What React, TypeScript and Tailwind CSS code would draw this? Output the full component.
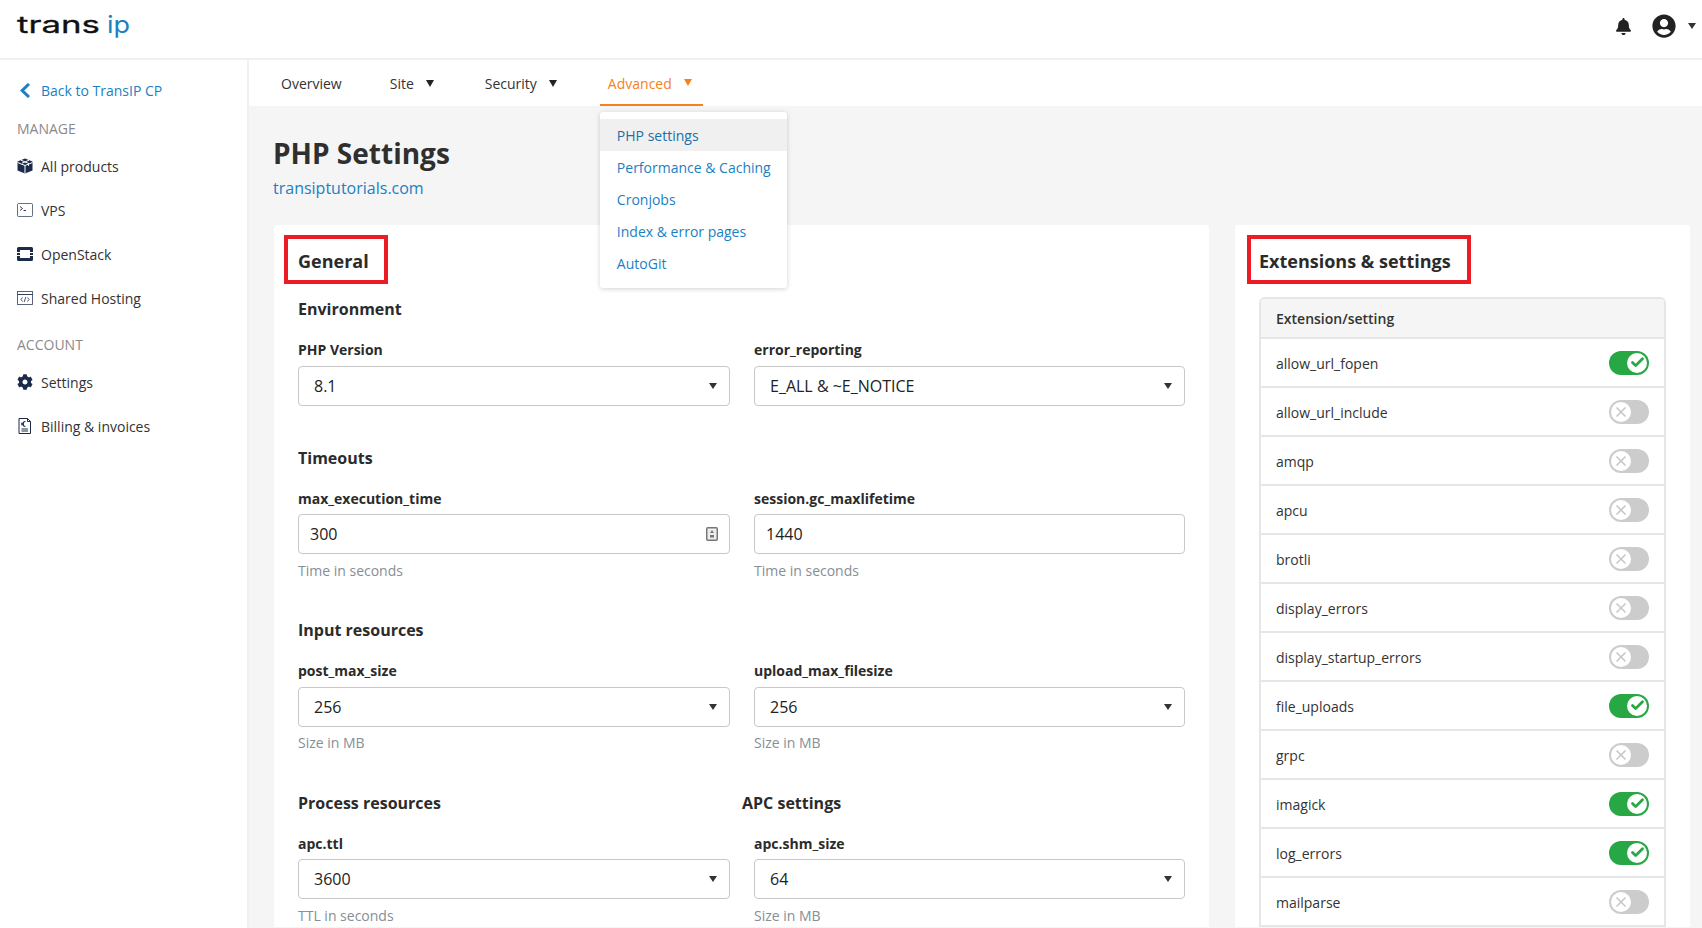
import { Check, X } from "lucide-react";
import { FaBell, FaCog, FaUserCircle } from "react-icons/fa";

const sideIconClass = "h-[16px] w-[16px] shrink-0 text-[#1c2b4a]";

function Caret({ className }: { className: string }) {
  return (
    <svg viewBox="0 0 8 7" preserveAspectRatio="none" className={className} fill="currentColor">
      <path d="M0 0h8L4 7z" />
    </svg>
  );
}

function CubeIcon() {
  return (
    <svg viewBox="0 0 16 16" className={sideIconClass}>
      <path fill="currentColor" d="M8 .5 15.5 3.6v8.8L8 15.5.5 12.4V3.6z" />
      <path fill="none" stroke="#fff" strokeWidth="1" d="M.5 4.500 8 7.500l7.500-3M8 7.500v8M4 2.200l7.500 3.200v2.400M12 2.200 5 5.200" />
    </svg>
  );
}

function VpsIcon() {
  return (
    <svg viewBox="0 0 16 16" className={sideIconClass} fill="none" stroke="currentColor" strokeWidth="0.9">
      <rect x="0.5" y="1.5" width="15" height="13" rx="1" strokeOpacity="0.75" />
      <path d="m3 4.500 2.500 2L3 8.500M6.500 8.500h2.500" strokeWidth="0.9" />
    </svg>
  );
}

function StackIcon() {
  return (
    <svg viewBox="0 0 16 16" className={sideIconClass}>
      <path
        fill="currentColor"
        d="M1.500 1h13A1.500 1.500 0 0 1 16 2.500V6h-3V4H3v2H0V2.500A1.500 1.500 0 0 1 1.500 1zM0 10h3v2h10v-2h3v3.500a1.500 1.500 0 0 1-1.500 1.500h-13A1.500 1.500 0 0 1 0 13.500zM0 7h3v2H0zM13 7h3v2h-3z"
      />
    </svg>
  );
}

function HostingIcon() {
  return (
    <svg viewBox="0 0 16 16" className={sideIconClass} fill="none" stroke="currentColor" strokeWidth="0.9">
      <rect x="0.500" y="1.500" width="15" height="13" strokeOpacity="0.8" />
      <path d="M.5 4.500h15" />
      <path d="M5.500 7.500 4 9.500l1.500 2M10.500 7.500l1.500 2-1.500 2M8.800 7 7.200 12" strokeWidth="0.8" />
    </svg>
  );
}

function BillingIcon() {
  return (
    <svg viewBox="0 0 16 16" className={sideIconClass} fill="none" stroke="currentColor" strokeWidth="1">
      <path d="M2 .5h8.500l3 3v12H2z" />
      <path d="M10.500.5v3h3M4.500 11h6.500M4.500 13h6.500" />
      <path d="M8.500 3.500a2.200 2.200 0 1 0 0 5M4 5.300h3M4 6.800h3" strokeWidth="1.100" />
    </svg>
  );
}

function SideItem({ icon, label }: { icon: React.ReactNode; label: string }) {
  return (
    <div className="flex h-[44px] items-center gap-[8px] pl-[17px]">
      {icon}
      <span className="text-[14px] text-[#333]">{label}</span>
    </div>
  );
}

function Sidebar() {
  return (
    <aside className="w-[249px] shrink-0 border-r-2 border-[#f0f0f0] bg-white">
      <div className="flex h-[60px] items-center pl-[20px] pt-[1px] text-[14px] text-[#1b7fc4]">
        <svg viewBox="0 0 10 15" className="h-[15px] w-[10px] shrink-0" fill="none" stroke="currentColor" strokeWidth="3">
          <path d="M9 1 2.200 7.500 9 14" />
        </svg>
        <span className="ml-[11px]">Back to TransIP CP</span>
      </div>
      <div className="flex h-[17px] items-center pl-[17px] text-[14px] text-[#8a8a8a]">MANAGE</div>
      <div className="mt-[7px]">
        <SideItem icon={<CubeIcon />} label="All products" />
        <SideItem icon={<VpsIcon />} label="VPS" />
        <SideItem icon={<StackIcon />} label="OpenStack" />
        <SideItem icon={<HostingIcon />} label="Shared Hosting" />
      </div>
      <div className="mt-[14px] flex h-[20px] items-center pl-[17px] text-[14px] text-[#8a8a8a]">ACCOUNT</div>
      <div className="mt-[6px]">
        <SideItem icon={<FaCog className={sideIconClass} />} label="Settings" />
        <SideItem icon={<BillingIcon />} label="Billing & invoices" />
      </div>
    </aside>
  );
}

function NavItem({ label, caret, left }: { label: string; caret?: boolean; left: string }) {
  return (
    <div className={`flex items-center pt-[1px] ${left}`}>
      <span>{label}</span>
      {caret && <Caret className="ml-[12px] mb-[1px] h-[7px] w-[8px] text-[#222]" />}
    </div>
  );
}

function AdvancedMenu() {
  const links = ["PHP settings", "Performance & Caching", "Cronjobs", "Index & error pages", "AutoGit"];
  return (
    <div className="absolute left-0 top-[52px] z-10 w-[187px] rounded-[3px] bg-white pb-[9px] pt-[7px] shadow-[0_1px_5px_rgba(0,0,0,0.18)]">
      {links.map((link, i) => (
        <div
          key={link}
          className={`flex h-[32px] items-center pl-[17px] text-[14px] ${
            i === 0 ? "bg-[#f0f0f0] text-[#1a6fa8]" : "text-[#1b7fc4]"
          }`}
        >
          {link}
        </div>
      ))}
    </div>
  );
}

function TopNav() {
  return (
    <nav className="flex h-[46px] shrink-0 items-center bg-white text-[14px] text-[#333]">
      <NavItem label="Overview" left="ml-[32px]" />
      <NavItem label="Site" caret left="ml-[48px]" />
      <NavItem label="Security" caret left="ml-[51px]" />
      <div className="relative ml-[43px] flex h-[46px] w-[103px] items-center border-b-2 border-[#f58220] pl-[8px] pt-[2px] text-[#f58220]">
        <span>Advanced</span>
        <Caret className="ml-[12px] mb-[2px] h-[7px] w-[8px] text-[#f58220]" />
        <AdvancedMenu />
      </div>
    </nav>
  );
}

function SectionTitle({ children, className = "" }: { children: React.ReactNode; className?: string }) {
  return <h3 className={`mb-[18px] h-[24px] text-[16px] font-bold leading-[24px] text-[#2b2b2b] ${className}`}>{children}</h3>;
}

function Field({
  label,
  value,
  help,
  select = true,
  spinner = false,
}: {
  label: string;
  value: string;
  help?: string;
  select?: boolean;
  spinner?: boolean;
}) {
  return (
    <div>
      <div className="mb-[6.5px] h-[20px] text-[14px] font-bold leading-[21px] text-[#2b2b2b]">{label}</div>
      <div
        className={`flex h-[40px] items-center justify-between rounded-[4px] border border-[#c8c8c8] bg-white text-[16px] text-[#222] ${
          select ? "pl-[15px] pr-[12px]" : "pl-[11px] pr-[11px]"
        }`}
      >
        <span>{value}</span>
        {select && <Caret className="h-[6px] w-[8px] text-[#333]" />}
        {spinner && (
          <svg viewBox="0 0 12 14" className="h-[14px] w-[12px] text-[#777]">
            <rect x="0.75" y="0.75" width="10.5" height="12.5" rx="1" fill="#eee" stroke="currentColor" strokeWidth="1.500" />
            <path d="M6 3 8 6H4zM4 8h4v2.500H4z" fill="currentColor" />
          </svg>
        )}
      </div>
      {help && <div className="mt-[6.5px] h-[20px] text-[14px] leading-[20px] text-[#868e96]">{help}</div>}
    </div>
  );
}

function RedHeading({ children, className }: { children: React.ReactNode; className: string }) {
  return (
    <h2 className={`inline-flex h-[49px] items-center border-4 border-[#ed1c24] pt-[3px] text-[18px] font-bold text-[#2b2b2b] ${className}`}>
      {children}
    </h2>
  );
}

const fieldGrid = "grid grid-cols-[431.5px_430.5px] gap-x-[24.5px]";

function GeneralCard() {
  return (
    <section className="min-w-0 flex-1 rounded-t-[3px] bg-white pl-[24px] pr-[24px] pt-[10px]">
      <RedHeading className="-ml-[14px] pl-[10px] pr-[15px]">General</RedHeading>
      <div className="mt-[13px]">
        <SectionTitle>Environment</SectionTitle>
        <div className={fieldGrid}>
          <Field label="PHP Version" value="8.1" />
          <Field label="error_reporting" value="E_ALL & ~E_NOTICE" />
        </div>
      </div>
      <div className="mt-[40px]">
        <SectionTitle>Timeouts</SectionTitle>
        <div className={fieldGrid}>
          <Field label="max_execution_time" value="300" help="Time in seconds" select={false} spinner />
          <Field label="session.gc_maxlifetime" value="1440" help="Time in seconds" select={false} />
        </div>
      </div>
      <div className="mt-[37.5px]">
        <SectionTitle>Input resources</SectionTitle>
        <div className={fieldGrid}>
          <Field label="post_max_size" value="256" help="Size in MB" />
          <Field label="upload_max_filesize" value="256" help="Size in MB" />
        </div>
      </div>
      <div className={`mt-[37.5px] ${fieldGrid}`}>
        <div>
          <SectionTitle>Process resources</SectionTitle>
          <Field label="apc.ttl" value="3600" help="TTL in seconds" />
        </div>
        <div>
          <SectionTitle className="-ml-[12px]">APC settings</SectionTitle>
          <Field label="apc.shm_size" value="64" help="Size in MB" />
        </div>
      </div>
    </section>
  );
}

const extensions: [string, boolean][] = [
  ["allow_url_fopen", true],
  ["allow_url_include", false],
  ["amqp", false],
  ["apcu", false],
  ["brotli", false],
  ["display_errors", false],
  ["display_startup_errors", false],
  ["file_uploads", true],
  ["grpc", false],
  ["imagick", true],
  ["log_errors", true],
  ["mailparse", false],
];

function Toggle({ on }: { on: boolean }) {
  return (
    <div
      className={`flex h-[24px] w-[40px] items-center rounded-full p-[2px] ${
        on ? "justify-end bg-[#28a745]" : "justify-start bg-[#cccccc]"
      }`}
    >
      <div className="flex h-[20px] w-[20px] items-center justify-center rounded-full bg-white">
        {on ? (
          <Check className="h-[15px] w-[15px] text-[#28a745]" strokeWidth={4.5} />
        ) : (
          <X className="h-[16px] w-[16px] text-[#c8c8c8]" strokeWidth={2.5} />
        )}
      </div>
    </div>
  );
}

function ExtensionsCard() {
  return (
    <section className="w-[455px] shrink-0 rounded-t-[3px] bg-white px-[24px] pt-[10px]">
      <RedHeading className="-ml-[12px] pl-[8px] pr-[16px]">Extensions &amp; settings</RedHeading>
      <div className="mt-[13px] overflow-hidden rounded-t-[6px] border-2 border-b-0 border-[#e6e6e6]">
        <div className="flex h-[40px] items-center border-b-2 border-[#e6e6e6] bg-[#f5f5f5] pl-[15px] text-[14px] font-semibold text-[#333]">
          Extension/setting
        </div>
        {extensions.map(([name, on]) => (
          <div key={name} className="flex h-[49px] items-center justify-between border-b-2 border-[#e6e6e6] pl-[15px] pr-[15px] text-[14px] text-[#333]">
            <span className="pt-[2px]">{name}</span>
            <Toggle on={on} />
          </div>
        ))}
      </div>
    </section>
  );
}

function Logo() {
  return (
    <svg viewBox="0 0 130 40" className="mb-[8px] ml-[15px] h-[40px] w-[130px]">
      <text x="2" y="28" fontSize="24" fontFamily="Inter, sans-serif" fill="#111" stroke="#111" strokeWidth="0.3" textLength="83" lengthAdjust="spacingAndGlyphs">
        trans
      </text>
      <text x="92" y="28" fontSize="24" fontFamily="Inter, sans-serif" fill="#1b7fc4" textLength="23" lengthAdjust="spacingAndGlyphs">
        ip
      </text>
    </svg>
  );
}

export default function App() {
  return (
    <div className="flex h-[928px] w-full flex-col overflow-hidden bg-white font-['Open_Sans',sans-serif]">
      <header className="flex h-[60px] shrink-0 items-center justify-between border-b-2 border-[#f0f0f0] bg-white">
        <Logo />
        <div className="flex items-center pb-[6px] pr-[6px]">
          <FaBell className="h-[17px] w-[15px] text-[#222]" />
          <FaUserCircle className="ml-[21px] h-[24px] w-[24px] text-[#222]" />
          <Caret className="ml-[12px] mb-[1px] h-[6px] w-[8px] text-[#333]" />
        </div>
      </header>
      <div className="flex min-h-0 flex-1">
        <Sidebar />
        <main className="flex min-w-0 flex-1 flex-col bg-[#f5f5f5]">
          <TopNav />
          <div className="min-h-0 flex-1 pl-[25px] pr-[12px] pt-[28px]">
            <h1 className="-ml-[1px] h-[38px] text-[28px] font-bold leading-[38px] text-[#2f2f2f]">PHP Settings</h1>
            <a className="-ml-[1px] mt-[4px] block h-[24px] text-[16px] leading-[24px] text-[#1b7fc4]">transiptutorials.com</a>
            <div className="mt-[25px] flex gap-[26px]">
              <GeneralCard />
              <ExtensionsCard />
            </div>
          </div>
        </main>
      </div>
    </div>
  );
}
